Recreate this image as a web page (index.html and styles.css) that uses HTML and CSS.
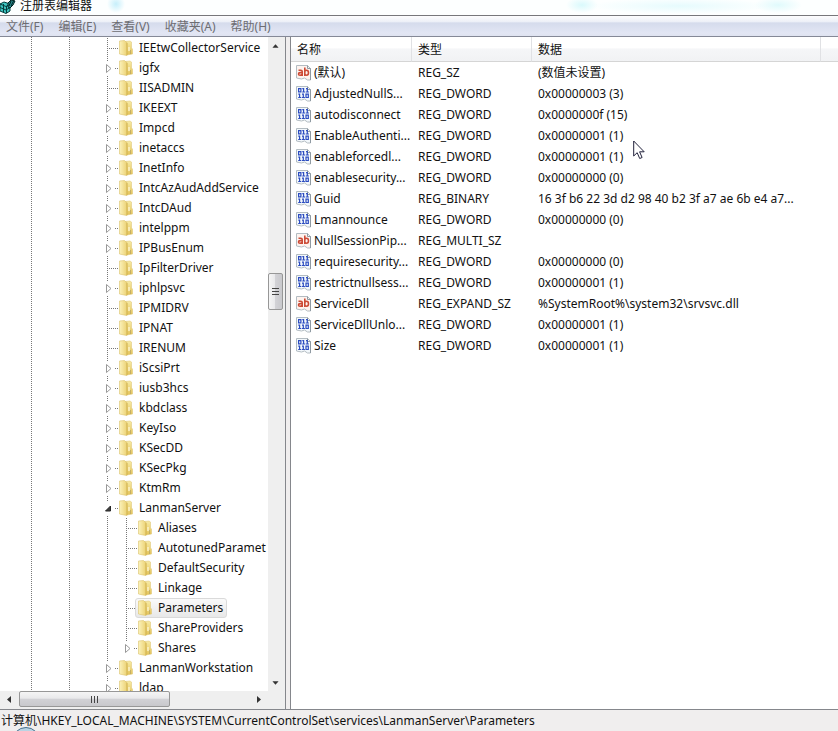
FILE: index.html
```html
<!DOCTYPE html>
<html lang="zh-CN">
<head>
  <meta charset="UTF-8">
  <title>注册表编辑器</title>
  <link rel="stylesheet" href="styles.css">
</head>
<body>

<!-- shared icons -->
<svg class="sprite" aria-hidden="true">
  <defs>
    <linearGradient id="gold" x1="0" x2="1" y1="0" y2="0">
      <stop offset="0" stop-color="#fbf2bb"/>
      <stop offset="1" stop-color="#ecd274"/>
    </linearGradient>
    <linearGradient id="gold2" x1="0" x2="0" y1="0" y2="1">
      <stop offset="0" stop-color="#f7eba6"/>
      <stop offset="1" stop-color="#e3c257"/>
    </linearGradient>
  </defs>
  <symbol id="folder" viewBox="0 0 14 16">
    <path d="M6 1.500l5-.5 1.500 1v6l1 1v5l-6 1z" fill="url(#gold2)" stroke="#dcc370" stroke-width=".5"/>
    <path d="M.5 1l5-.5 1.500 1.500 1 .5v13l-1.500-.2-6-1.300z" fill="url(#gold)" stroke="#dcc36c" stroke-width=".6"/>
    <path d="M8 3v12" stroke="#cfae4a" stroke-width=".8"/>
    <path d="M10 7v4" stroke="#fffbe0" stroke-width="1.200"/>
    <path d="M11.500 10v4" stroke="#b9a766" stroke-width=".8"/>
  </symbol>
  <symbol id="closed" viewBox="0 0 9 9">
    <path d="M2.500 .5v8l4.500-4z" fill="#fff" stroke="#999"/>
  </symbol>
  <symbol id="opened" viewBox="0 0 9 9">
    <path d="M6.500 2v5h-5z" fill="#404040" stroke="#262626"/>
  </symbol>
  <symbol id="str" viewBox="0 0 16 16">
    <path d="M.5 .5h11l3 3v11.500l-3 0-3-2-3 1-5-1z" fill="#fdf3ef" stroke="#b3bcc2"/>
    <path d="M11.500 .5v3h3v11.500" fill="none" stroke="#8f9aa2"/>
    <g fill="none" stroke="#cc4a35" stroke-width="1.600">
      <path d="M2.500 5.200h2.300q1.400 0 1.400 1.400V11M6.200 7.600H4.200q-1.700 0-1.700 1.300t1.500 1.300q1.500 0 2.200-1"/>
      <path d="M8.800 2.500V11M8.800 6.500q.5-1.300 1.700-1.300 2 0 2 2.500t-2 2.500q-1.200 0-1.700-1"/>
    </g>
  </symbol>
  <symbol id="bin" viewBox="0 0 16 16">
    <path d="M.5 .5h11l3 3v11.500l-3 0-3-2-3 1-5-1z" fill="#f3f8fc" stroke="#b3bcc2"/>
    <path d="M11.500 .5v3h3v11.500" fill="none" stroke="#8f9aa2"/>
    <g fill="none" stroke="#2c4cc0" stroke-width="1.200">
      <path d="M2.600 2.600h2.300v3.300H2.600zM6.300 2.600h1.300V6M6.200 6h3M10 2.600h1.300V6M9.900 6h3"/>
      <path d="M2.300 8.100h1.300v3.400M2.200 11.500h3M6 8.100h1.300v3.400M5.900 11.500h3M10 8.100h2.300v3.400H10z"/>
    </g>
  </symbol>
</svg>

<header class="titlebar">
  <svg class="app-icon" viewBox="0 0 16 16" aria-hidden="true">
    <path d="M0 6l4-2 6 2v7l-4 2.500-6-2.500z" fill="#3cc4c0" stroke="#053c3c"/>
    <path d="M0 9.500l6 2.500 4-2.500M3.500 6v8M6.500 8v7M0 6l6 2.500L10 6" fill="none" stroke="#053c3c"/>
    <path d="M8 5l3-3 4 1-2 4-3 3-2-1z" fill="#2a8f92" stroke="#022"/>
    <path d="M11 3l-2 5M14 2l-3 6" stroke="#022"/>
  </svg>
  <h1>注册表编辑器</h1>
</header>

<nav class="menubar">
  <button type="button">文件(F)</button>
  <button type="button">编辑(E)</button>
  <button type="button">查看(V)</button>
  <button type="button">收藏夹(A)</button>
  <button type="button">帮助(H)</button>
</nav>

<main class="panes">
  <section class="tree-pane">
    <div class="tree-main">
      <ul class="tree">
        <li><div class="row"><span class="branch"></span><svg class="folder"><use href="#folder"/></svg><span class="key">IEEtwCollectorService</span></div></li>
        <li><div class="row"><button class="branch" aria-label="igfx"><svg><use href="#closed"/></svg></button><svg class="folder"><use href="#folder"/></svg><span class="key">igfx</span></div></li>
        <li><div class="row"><span class="branch"></span><svg class="folder"><use href="#folder"/></svg><span class="key">IISADMIN</span></div></li>
        <li><div class="row"><button class="branch" aria-label="IKEEXT"><svg><use href="#closed"/></svg></button><svg class="folder"><use href="#folder"/></svg><span class="key">IKEEXT</span></div></li>
        <li><div class="row"><button class="branch" aria-label="Impcd"><svg><use href="#closed"/></svg></button><svg class="folder"><use href="#folder"/></svg><span class="key">Impcd</span></div></li>
        <li><div class="row"><button class="branch" aria-label="inetaccs"><svg><use href="#closed"/></svg></button><svg class="folder"><use href="#folder"/></svg><span class="key">inetaccs</span></div></li>
        <li><div class="row"><button class="branch" aria-label="InetInfo"><svg><use href="#closed"/></svg></button><svg class="folder"><use href="#folder"/></svg><span class="key">InetInfo</span></div></li>
        <li><div class="row"><button class="branch" aria-label="IntcAzAudAddService"><svg><use href="#closed"/></svg></button><svg class="folder"><use href="#folder"/></svg><span class="key">IntcAzAudAddService</span></div></li>
        <li><div class="row"><button class="branch" aria-label="IntcDAud"><svg><use href="#closed"/></svg></button><svg class="folder"><use href="#folder"/></svg><span class="key">IntcDAud</span></div></li>
        <li><div class="row"><button class="branch" aria-label="intelppm"><svg><use href="#closed"/></svg></button><svg class="folder"><use href="#folder"/></svg><span class="key">intelppm</span></div></li>
        <li><div class="row"><button class="branch" aria-label="IPBusEnum"><svg><use href="#closed"/></svg></button><svg class="folder"><use href="#folder"/></svg><span class="key">IPBusEnum</span></div></li>
        <li><div class="row"><span class="branch"></span><svg class="folder"><use href="#folder"/></svg><span class="key">IpFilterDriver</span></div></li>
        <li><div class="row"><button class="branch" aria-label="iphlpsvc"><svg><use href="#closed"/></svg></button><svg class="folder"><use href="#folder"/></svg><span class="key">iphlpsvc</span></div></li>
        <li><div class="row"><span class="branch"></span><svg class="folder"><use href="#folder"/></svg><span class="key">IPMIDRV</span></div></li>
        <li><div class="row"><span class="branch"></span><svg class="folder"><use href="#folder"/></svg><span class="key">IPNAT</span></div></li>
        <li><div class="row"><span class="branch"></span><svg class="folder"><use href="#folder"/></svg><span class="key">IRENUM</span></div></li>
        <li><div class="row"><button class="branch" aria-label="iScsiPrt"><svg><use href="#closed"/></svg></button><svg class="folder"><use href="#folder"/></svg><span class="key">iScsiPrt</span></div></li>
        <li><div class="row"><button class="branch" aria-label="iusb3hcs"><svg><use href="#closed"/></svg></button><svg class="folder"><use href="#folder"/></svg><span class="key">iusb3hcs</span></div></li>
        <li><div class="row"><button class="branch" aria-label="kbdclass"><svg><use href="#closed"/></svg></button><svg class="folder"><use href="#folder"/></svg><span class="key">kbdclass</span></div></li>
        <li><div class="row"><button class="branch" aria-label="KeyIso"><svg><use href="#closed"/></svg></button><svg class="folder"><use href="#folder"/></svg><span class="key">KeyIso</span></div></li>
        <li><div class="row"><button class="branch" aria-label="KSecDD"><svg><use href="#closed"/></svg></button><svg class="folder"><use href="#folder"/></svg><span class="key">KSecDD</span></div></li>
        <li><div class="row"><button class="branch" aria-label="KSecPkg"><svg><use href="#closed"/></svg></button><svg class="folder"><use href="#folder"/></svg><span class="key">KSecPkg</span></div></li>
        <li><div class="row"><button class="branch" aria-label="KtmRm"><svg><use href="#closed"/></svg></button><svg class="folder"><use href="#folder"/></svg><span class="key">KtmRm</span></div></li>
        <li>
          <div class="row"><button class="branch" aria-label="LanmanServer"><svg><use href="#opened"/></svg></button><svg class="folder"><use href="#folder"/></svg><span class="key">LanmanServer</span></div>
          <ul class="subtree">
            <li><div class="row"><span class="branch"></span><svg class="folder"><use href="#folder"/></svg><span class="key">Aliases</span></div></li>
            <li><div class="row"><span class="branch"></span><svg class="folder"><use href="#folder"/></svg><span class="key">AutotunedParamet</span></div></li>
            <li><div class="row"><span class="branch"></span><svg class="folder"><use href="#folder"/></svg><span class="key">DefaultSecurity</span></div></li>
            <li><div class="row"><span class="branch"></span><svg class="folder"><use href="#folder"/></svg><span class="key">Linkage</span></div></li>
            <li><div class="row"><span class="branch"></span><span class="selected"><svg class="folder"><use href="#folder"/></svg><span class="key">Parameters</span></span></div></li>
            <li><div class="row"><span class="branch"></span><svg class="folder"><use href="#folder"/></svg><span class="key">ShareProviders</span></div></li>
            <li><div class="row"><button class="branch" aria-label="Shares"><svg><use href="#closed"/></svg></button><svg class="folder"><use href="#folder"/></svg><span class="key">Shares</span></div></li>
          </ul>
        </li>
        <li><div class="row"><button class="branch" aria-label="LanmanWorkstation"><svg><use href="#closed"/></svg></button><svg class="folder"><use href="#folder"/></svg><span class="key">LanmanWorkstation</span></div></li>
        <li><div class="row"><button class="branch" aria-label="ldap"><svg><use href="#closed"/></svg></button><svg class="folder"><use href="#folder"/></svg><span class="key">ldap</span></div></li>
      </ul>
      <div class="scroll-v">
        <svg class="arrow" viewBox="0 0 17 17"><path d="M5 11l3.500-4 3.500 4z"/></svg>
        <div class="space-before"></div>
        <div class="thumb"><span></span><span></span><span></span></div>
        <div class="space-after"></div>
        <svg class="arrow" viewBox="0 0 17 17"><path d="M5 7l3.500 4L12 7z"/></svg>
      </div>
    </div>
    <div class="scroll-h">
      <svg class="arrow" viewBox="0 0 17 17"><path d="M10 5L6 8.500l4 3.500z"/></svg>
      <div class="thumb"><span></span><span></span><span></span></div>
      <div class="space-after"></div>
      <svg class="arrow" viewBox="0 0 17 17"><path d="M6 5l4 3.500L6 12z"/></svg>
    </div>
  </section>

  <section class="values-pane">
    <table class="values">
      <colgroup>
        <col class="col-name">
        <col class="col-type">
        <col class="col-data">
        <col>
      </colgroup>
      <thead>
        <tr><th>名称</th><th>类型</th><th>数据</th><th></th></tr>
      </thead>
      <tbody>
        <tr><td><div class="name"><svg><use href="#str"/></svg>(默认)</div></td><td>REG_SZ</td><td>(数值未设置)</td><td></td></tr>
        <tr><td><div class="name"><svg><use href="#bin"/></svg>AdjustedNullS...</div></td><td>REG_DWORD</td><td>0x00000003 (3)</td><td></td></tr>
        <tr><td><div class="name"><svg><use href="#bin"/></svg>autodisconnect</div></td><td>REG_DWORD</td><td>0x0000000f (15)</td><td></td></tr>
        <tr><td><div class="name"><svg><use href="#bin"/></svg>EnableAuthenti...</div></td><td>REG_DWORD</td><td>0x00000001 (1)</td><td></td></tr>
        <tr><td><div class="name"><svg><use href="#bin"/></svg>enableforcedl...</div></td><td>REG_DWORD</td><td>0x00000001 (1)</td><td></td></tr>
        <tr><td><div class="name"><svg><use href="#bin"/></svg>enablesecurity...</div></td><td>REG_DWORD</td><td>0x00000000 (0)</td><td></td></tr>
        <tr><td><div class="name"><svg><use href="#bin"/></svg>Guid</div></td><td>REG_BINARY</td><td>16 3f b6 22 3d d2 98 40 b2 3f a7 ae 6b e4 a7...</td><td></td></tr>
        <tr><td><div class="name"><svg><use href="#bin"/></svg>Lmannounce</div></td><td>REG_DWORD</td><td>0x00000000 (0)</td><td></td></tr>
        <tr><td><div class="name"><svg><use href="#str"/></svg>NullSessionPip...</div></td><td>REG_MULTI_SZ</td><td></td><td></td></tr>
        <tr><td><div class="name"><svg><use href="#bin"/></svg>requiresecurity...</div></td><td>REG_DWORD</td><td>0x00000000 (0)</td><td></td></tr>
        <tr><td><div class="name"><svg><use href="#bin"/></svg>restrictnullsess...</div></td><td>REG_DWORD</td><td>0x00000001 (1)</td><td></td></tr>
        <tr><td><div class="name"><svg><use href="#str"/></svg>ServiceDll</div></td><td>REG_EXPAND_SZ</td><td>%SystemRoot%\system32\srvsvc.dll</td><td></td></tr>
        <tr><td><div class="name"><svg><use href="#bin"/></svg>ServiceDllUnlo...</div></td><td>REG_DWORD</td><td>0x00000001 (1)</td><td></td></tr>
        <tr><td><div class="name"><svg><use href="#bin"/></svg>Size</div></td><td>REG_DWORD</td><td>0x00000001 (1)</td><td></td></tr>
      </tbody>
    </table>
  </section>
</main>

<footer class="statusbar">
  计算机\HKEY_LOCAL_MACHINE\SYSTEM\CurrentControlSet\services\LanmanServer\Parameters
  <span class="orb"></span>
</footer>

<!-- mouse pointer over the list -->
<svg class="cursor" viewBox="0 0 12 20" aria-hidden="true">
  <path d="M.7 1v15l3.500-3.300 2.500 5.800 2.400-1-2.500-5.700h4.600z" fill="#fff" stroke="#22223c"/>
</svg>

</body>
</html>
```
FILE: styles.css
```css
* {
  box-sizing: border-box;
}

body {
  margin: 0;
  height: 100vh;
  display: flex;
  flex-direction: column;
  overflow: hidden;
  background: #f0eeee;
  color: #111;
  font-family: "Noto Sans", "Noto Sans CJK SC", sans-serif;
  font-size: 12px;
  line-height: 20px;
}

button {
  font: inherit;
  color: inherit;
  background: none;
  border: none;
  padding: 0;
}

.sprite {
  position: absolute;
  width: 0;
  height: 0;
}

/* title bar */
.titlebar {
  flex: none;
  display: flex;
  align-items: center;
  gap: 4px;
  height: 16px;
  padding-bottom: 4px;
  overflow: hidden;
  border-bottom: 1px solid #77777b;
  background:
    radial-gradient(ellipse 9px 9px at 116px 4px, #c6effb, transparent),
    radial-gradient(ellipse 16px 8px at 582px 5px, #d9f9fc, transparent),
    radial-gradient(ellipse 90px 8px at 680px 6px, #e6fbfd, transparent),
    radial-gradient(ellipse 24px 8px at 778px 5px, #e0fafc, transparent),
    #fdffff;
}

.titlebar h1 {
  margin: 0;
  font-size: 12px;
  font-weight: normal;
  line-height: 12px;
  white-space: nowrap;
}

.app-icon {
  flex: none;
  width: 16px;
  height: 16px;
}

/* menu */
.menubar {
  flex: none;
  display: flex;
  gap: 15px;
  height: 21px;
  padding-left: 6px;
  color: #6d6d72;
  background: linear-gradient(#fdfdfe, #eceff7 30%, #d5dbec 34%, #e2e6f4 85%, #dfe3f0);
  border-bottom: 1px solid #858997;
}

.menubar button {
  padding-top: 1px;
}

/* panes */
.panes {
  flex: 1;
  min-height: 0;
  display: flex;
  gap: 4px;
  border-bottom: 1px solid #85878c;
}

.tree-pane {
  flex: none;
  width: 286px;
  display: flex;
  flex-direction: column;
  border-right: 1px solid #85878c;
  background: #fff;
}

.tree-main {
  flex: 1;
  min-height: 0;
  display: flex;
}

.tree,
.subtree {
  list-style: none;
  margin: 0;
}

.tree {
  flex: 1;
  min-width: 0;
  overflow: hidden;
  padding: 1px 0 0 100px;
  background:
    repeating-linear-gradient(#777 0 1px, transparent 1px 2px) 31px 0 / 1px 100% no-repeat,
    repeating-linear-gradient(#777 0 1px, transparent 1px 2px) 69px 0 / 1px 100% no-repeat;
}

.subtree {
  padding: 0 0 0 19px;
  background: repeating-linear-gradient(#777 0 1px, transparent 1px 2px) 7px 0 / 1px 100% no-repeat;
}

.row {
  display: flex;
  align-items: center;
  height: 20px;
  white-space: nowrap;
}

.branch {
  flex: none;
  display: flex;
  align-items: center;
  width: 18px;
  height: 20px;
  padding-left: 3px;
  background:
    repeating-linear-gradient(#777 0 1px, transparent 1px 2px) 7px 0 / 1px 100% no-repeat,
    repeating-linear-gradient(to right, #777 0 1px, transparent 1px 2px) 7px 10px / 11px 1px no-repeat;
}

/* the last child ends its line */
.subtree li:last-child .branch {
  background:
    repeating-linear-gradient(#777 0 1px, transparent 1px 2px) 7px 0 / 1px 10px no-repeat,
    repeating-linear-gradient(to right, #777 0 1px, transparent 1px 2px) 7px 10px / 11px 1px no-repeat;
}

.branch svg {
  width: 11px;
  height: 15px;
  padding: 3px 1px;
  background: #fff;
}

.folder {
  flex: none;
  width: 14px;
  height: 16px;
  margin: 0 3px 0 1px;
}

.key {
  padding: 0 3px;
}

.selected {
  display: flex;
  align-items: center;
  height: 20px;
  margin-left: -2px;
  padding-left: 1px;
  border: 1px solid #dadada;
  border-radius: 3px;
  background: linear-gradient(#fafafa, #e8e8e8);
}

/* scroll bars */
.scroll-v,
.scroll-h {
  flex: none;
  display: flex;
  background: #efefef;
}

.scroll-v {
  flex-direction: column;
  width: 17px;
  padding-right: 2px;
}

.scroll-h {
  height: 18px;
  padding: 0 17px 1px 1px;
}

.arrow {
  flex: none;
  width: 17px;
  height: 17px;
  fill: #333;
}

.scroll-v .arrow {
  width: 15px;
}

.thumb {
  flex: none;
  display: flex;
  align-items: center;
  justify-content: center;
  gap: 2px;
  border: 1px solid #979797;
  border-radius: 2px;
}

.scroll-v .thumb {
  flex-direction: column;
  height: 37px;
  background: linear-gradient(to right, #f5f5f5, #e9e9eb 45%, #d2d2d6 50%, #c8c8cc);
}

.scroll-v .thumb span {
  width: 7px;
  height: 1px;
  background: #444;
}

.scroll-h .thumb {
  width: 151px;
  margin-bottom: 1px;
  margin-left: 1px;
  background: linear-gradient(#f5f5f5, #e9e9eb 45%, #d2d2d6 50%, #c8c8cc);
}

.scroll-h .thumb span {
  width: 1px;
  height: 7px;
  background: #444;
}

.space-before {
  flex: 3;
}

.space-after {
  flex: 5;
}

/* value list */
.values-pane {
  flex: 1;
  min-width: 0;
  overflow: hidden;
  border-left: 1px solid #85878c;
  background: #fff;
}

.values {
  width: 100%;
  table-layout: fixed;
  border-collapse: separate;
  border-spacing: 0;
}

.col-name {
  width: 121px;
}

.col-type {
  width: 120px;
}

.col-data {
  width: 289px;
}

.values th {
  height: 25px;
  padding: 1px 6px 0;
  text-align: left;
  font-weight: normal;
  border-right: 1px solid #e0e1e4;
  border-bottom: 1px solid #d5d5d5;
  background: linear-gradient(#fff 45%, #f5f6f8 50%, #f1f2f4);
}

.values th:last-child {
  border-right: none;
}

.values td {
  height: 21px;
  padding: 0 0 0 6px;
  white-space: nowrap;
}

.values td:first-child {
  padding-left: 5px;
}

.name {
  display: flex;
  align-items: center;
  gap: 2px;
}

.name svg {
  flex: none;
  width: 16px;
  height: 16px;
}

/* status bar */
.statusbar {
  flex: none;
  height: 21px;
  padding: 1px 0 0 1px;
  white-space: nowrap;
  overflow: hidden;
  position: relative;
}

.orb {
  position: absolute;
  left: 12px;
  top: 17px;
  width: 28px;
  height: 28px;
  border: 1px solid #47708e;
  border-radius: 50%;
  background: #b9d4e4;
}

.cursor {
  position: absolute;
  left: 633px;
  top: 140px;
  width: 12px;
  height: 20px;
}
```
